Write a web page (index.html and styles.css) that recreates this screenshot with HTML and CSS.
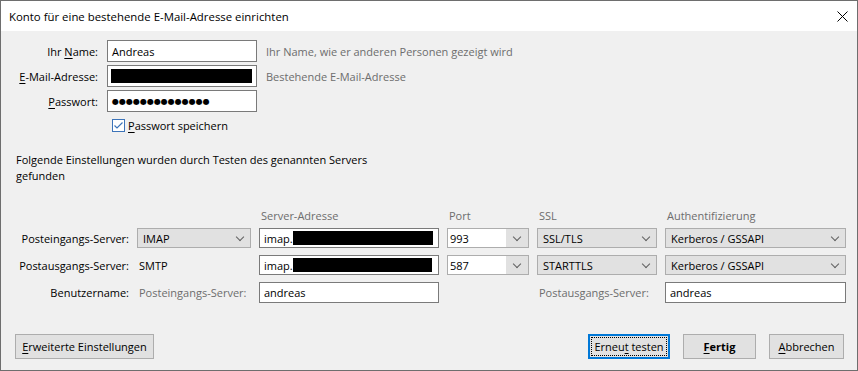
FILE: index.html
```html
<!DOCTYPE html>
<html lang="de">
<head>
    <meta charset="UTF-8">
    <title>Konto für eine bestehende E-Mail-Adresse einrichten</title>
    <link rel="stylesheet" href="styles.css">
</head>
<body>
    <div class="window">
        <div class="titlebar">
            <span class="title">Konto für eine bestehende E-Mail-Adresse einrichten</span>
            <svg class="close" width="11" height="11" viewBox="0 0 11 11">
                <path d="M0.5 0.5 L10.5 10.5 M10.5 0.5 L0.5 10.5" stroke="#000" stroke-width="1" fill="none"/>
            </svg>
        </div>

        <div class="content">
            <div class="identity">
                <label class="lbl">Ihr <u>N</u>ame:</label>
                <div class="field">Andreas</div>
                <span class="hint">Ihr Name, wie er anderen Personen gezeigt wird</span>

                <label class="lbl"><u>E</u>-Mail-Adresse:</label>
                <div class="field"><span class="redact full"></span></div>
                <span class="hint">Bestehende E-Mail-Adresse</span>

                <label class="lbl"><u>P</u>asswort:</label>
                <div class="field"><span class="dots">●●●●●●●●●●●●●●</span></div>
                <span></span>

                <span></span>
                <div class="check">
                    <svg width="13" height="13" viewBox="0 0 13 13">
                        <rect x="0.5" y="0.5" width="12" height="12" fill="#fff" stroke="#3d74b9"/>
                        <path d="M2.5 6.5 L5 9 L10.5 3.5" stroke="#3d74b9" stroke-width="1.2" fill="none"/>
                    </svg>
                    <span><u>P</u>asswort speichern</span>
                </div>
                <span></span>
            </div>

            <p class="found">Folgende Einstellungen wurden durch Testen des genannten Servers<br>gefunden</p>

            <div class="servers">
                <span></span>
                <span></span>
                <span class="head">Server-Adresse</span>
                <span class="head">Port</span>
                <span class="head">SSL</span>
                <span class="head">Authentifizierung</span>

                <span class="lbl">Posteingangs-Server:</span>
                <div class="select"><span>IMAP</span><i class="chev"></i></div>
                <div class="field small">imap.<span class="redact r1"></span></div>
                <div class="combo"><span>993</span><b><i class="chev"></i></b></div>
                <div class="select"><span>SSL/TLS</span><i class="chev"></i></div>
                <div class="select"><span>Kerberos / GSSAPI</span><i class="chev"></i></div>

                <span class="lbl">Postausgangs-Server:</span>
                <span class="plain">SMTP</span>
                <div class="field small">imap.<span class="redact r2"></span><span class="redact r3"></span></div>
                <div class="combo"><span>587</span><b><i class="chev"></i></b></div>
                <div class="select"><span>STARTTLS</span><i class="chev"></i></div>
                <div class="select"><span>Kerberos / GSSAPI</span><i class="chev"></i></div>

                <span class="lbl">Benutzername:</span>
                <span class="plain muted">Posteingangs-Server:</span>
                <div class="field">andreas</div>
                <span></span>
                <span class="plain muted">Postausgangs-Server:</span>
                <div class="field">andreas</div>
            </div>

            <div class="buttons">
                <button class="btn wide"><u>E</u>rweiterte Einstellungen</button>
                <div class="right">
                    <button class="btn focus">Erneu<u>t</u> testen</button>
                    <button class="btn default"><u>F</u>ertig</button>
                    <button class="btn"><u>A</u>bbrechen</button>
                </div>
            </div>
        </div>
    </div>
</body>
</html>
```

FILE: styles.css
```css
body {
    margin: 0;
    font-family: "Open Sans", "Noto Sans", sans-serif;
    font-size: 11px;
    color: #000;
}
.window {
    width: 858px;
    height: 371px;
    box-sizing: border-box;
    border: 1px solid #6e6e6e;
    background-color: #f0f0f0;
    display: flex;
    flex-direction: column;
}
.titlebar {
    height: 30px;
    background-color: #fff;
    display: flex;
    align-items: center;
    justify-content: space-between;
    padding: 0 9px 0 8px;
}
.title {
    font-size: 11.4px;
}
.content {
    flex: 1;
    display: flex;
    flex-direction: column;
    padding-top: 9px;
}
u {
    text-decoration-thickness: 1px;
    text-underline-offset: 2px;
}

/* oberer Block */
.identity {
    display: grid;
    grid-template-columns: 97px 150px auto;
    grid-auto-rows: 22px;
    column-gap: 9px;
    row-gap: 3px;
    align-items: center;
}
.lbl {
    text-align: right;
}
.hint {
    color: #6d6d6d;
}
.field {
    height: 100%;
    box-sizing: border-box;
    background-color: #fff;
    border: 1px solid #7a7a7a;
    padding: 0 4px;
    display: flex;
    align-items: center;
    white-space: nowrap;
    overflow: hidden;
}
.redact {
    display: inline-block;
    background-color: #000;
    height: 14px;
}
.redact.full {
    width: 143px;
    margin-left: -1px;
}
.redact.r1 {
    width: 140px;
}
.redact.r2 {
    width: 121px;
}
.redact.r3 {
    width: 18px;
}
.dots {
    font-family: "DejaVu Sans", sans-serif;
    font-size: 8px;
    letter-spacing: 0;
}
.check {
    display: flex;
    align-items: center;
    gap: 3px;
    margin-left: 5px;
    height: 16px;
    align-self: start;
    margin-top: 2px;
}

.found {
    margin: 15px 0 0 15px;
    line-height: 16px;
}

/* Server */
.servers {
    display: grid;
    grid-template-columns: 128px 114px 180px 82px 120px 181px;
    grid-template-rows: 13px 20px 20px 21px;
    column-gap: 8px;
    row-gap: 7px;
    align-items: center;
    margin-top: 24px;
}
.head {
    color: #6d6d6d;
    align-self: start;
    line-height: 16px;
    height: 13px;
    padding-left: 2px;
}
.plain {
    padding-left: 2px;
}
.muted {
    color: #6d6d6d;
}
.servers .field {
    padding-left: 4px;
}
.select {
    height: 100%;
    box-sizing: border-box;
    background-color: #e1e1e1;
    border: 1px solid #adadad;
    display: flex;
    align-items: center;
    justify-content: space-between;
    padding: 0 6px 0 5px;
}
.combo {
    height: 100%;
    box-sizing: border-box;
    border: 1px solid #adadad;
    background-color: #fff;
    display: flex;
    align-items: center;
    padding-left: 2px;
}
.combo span {
    flex: 1;
}
.combo b {
    width: 22px;
    height: 100%;
    background-color: #e1e1e1;
    display: flex;
    align-items: center;
    justify-content: center;
}
.chev {
    width: 5px;
    height: 5px;
    border-right: 1px solid #606060;
    border-bottom: 1px solid #606060;
    transform: rotate(45deg);
    margin-top: -3px;
    margin-right: 1px;
}

/* Buttons */
.buttons {
    margin-top: auto;
    display: flex;
    justify-content: space-between;
    padding: 0 13px 11px 14px;
}
.right {
    display: flex;
    gap: 13px;
}
.btn {
    height: 25px;
    box-sizing: border-box;
    background-color: #e1e1e1;
    border: 1px solid #adadad;
    font-family: inherit;
    font-size: 11px;
    color: #000;
    padding: 0;
}
.btn.wide {
    width: 139px;
}
.btn.focus {
    width: 82px;
    border-color: #0078d7;
    box-shadow: inset 0 0 0 1px #0078d7;
    outline: 1px dotted #000;
    outline-offset: -4px;
}
.btn.default {
    width: 73px;
    font-weight: bold;
}
.right .btn:last-child {
    width: 75px;
}
```
